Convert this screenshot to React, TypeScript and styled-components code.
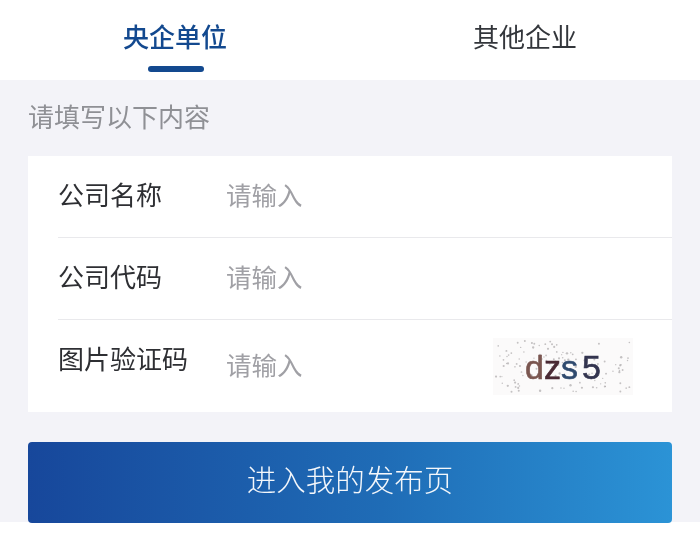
import React from "react";
import styled, { createGlobalStyle } from "styled-components";

const Global = createGlobalStyle`
  html, body { margin: 0; padding: 0; background: #fff; }
  body { font-family: "Noto Sans CJK SC", "Liberation Sans", sans-serif; }
  * { box-sizing: border-box; }
`;

const Page = styled.div`
  width: 700px;
  height: 555px;
  background: #fff;
  overflow: hidden;
  filter: blur(0.35px);
`;

const Tabs = styled.div`
  display: flex;
  height: 80px;
  background: #fff;
`;

const Tab = styled.div<{ $active?: boolean }>`
  position: relative;
  width: 350px;
  padding-top: 17px;
  text-align: center;
  font-size: 26px;
  line-height: 38px;
  font-weight: ${(p) => (p.$active ? 500 : 400)};
  color: ${(p) => (p.$active ? "#13498f" : "#33363b")};
`;

const Indicator = styled.div`
  position: absolute;
  left: 148px;
  top: 66px;
  width: 56px;
  height: 6px;
  border-radius: 3px;
  background: #13498f;
`;

const Body = styled.div`
  height: 442px;
  padding: 0 28px;
  background: #f3f3f8;
`;

const Hint = styled.div`
  height: 76px;
  padding-top: 17px;
  font-size: 26px;
  line-height: 38px;
  font-weight: 400;
  color: #8f9095;
`;

const Card = styled.div`
  height: 256px;
  padding-left: 30px;
  background: #fff;
`;

const Row = styled.div<{ $last?: boolean }>`
  display: flex;
  align-items: flex-start;
  height: ${(p) => (p.$last ? "93px" : "82px")};
  padding-top: 19px;
  border-bottom: ${(p) => (p.$last ? "none" : "1px solid #e9e9ec")};
`;

const Label = styled.div`
  width: 168px;
  font-size: 26px;
  line-height: 38px;
  color: #2e2f33;
`;

const Placeholder = styled.div<{ $low?: boolean }>`
  flex: 1;
  margin-top: ${(p) => (p.$low ? "6px" : "0")};
  font-size: 25.5px;
  line-height: 38px;
  font-weight: 400;
  color: #a0a0a5;
`;

const Captcha = styled.div`
  position: relative;
  display: flex;
  align-items: center;
  justify-content: center;
  width: 140px;
  height: 57px;
  margin: -1px 39px 0 0;
  background: #fbfafa;
`;

const Noise = styled.svg`
  position: absolute;
  inset: 0;
`;

const Glyph = styled.span<{ $color: string; $spaced?: boolean }>`
  position: relative;
  margin-left: ${(p) => (p.$spaced ? "4px" : "0")};
  font-family: "Liberation Sans", sans-serif;
  font-size: 34px;
  line-height: 40px;
  color: ${(p) => p.$color};
  -webkit-text-stroke: 0.6px ${(p) => p.$color};
`;

const Submit = styled.div`
  display: flex;
  align-items: center;
  justify-content: center;
  height: 81px;
  margin-top: 30px;
  padding-bottom: 9px;
  border-radius: 4px;
  background: linear-gradient(90deg, #17479b 0%, #1f6cb6 55%, #2b93d6 100%);
  font-size: 29.5px;
  font-weight: 300;
  color: #f4f7fb;
`;

const rand = (seed: number) => {
  const v = Math.sin(seed * 12.9898) * 43758.5453;
  return v - Math.floor(v);
};

const dots = Array.from({ length: 120 }, (_, i) => ({
  x: 3 + rand(i + 1) * 134,
  y: 3 + rand(i + 501) * 51,
  r: 0.6 + rand(i + 901) * 0.6,
}));

const letters: { c: string; color: string; spaced?: boolean }[] = [
  { c: "d", color: "#7a5650" },
  { c: "z", color: "#4a2a34" },
  { c: "s", color: "#2f4a6e" },
  { c: "5", color: "#33344f", spaced: true },
];

export default function App() {
  return (
    <Page>
      <Global />
      <Tabs>
        <Tab $active>
          央企单位
          <Indicator />
        </Tab>
        <Tab>其他企业</Tab>
      </Tabs>
      <Body>
        <Hint>请填写以下内容</Hint>
        <Card>
          <Row>
            <Label>公司名称</Label>
            <Placeholder>请输入</Placeholder>
          </Row>
          <Row>
            <Label>公司代码</Label>
            <Placeholder>请输入</Placeholder>
          </Row>
          <Row $last>
            <Label>图片验证码</Label>
            <Placeholder $low>请输入</Placeholder>
            <Captcha>
              <Noise width="140" height="57" viewBox="0 0 140 57">
                {dots.map((d, i) => (
                  <circle key={i} cx={d.x} cy={d.y} r={d.r} fill="#8d8a8c" opacity="0.5" />
                ))}
              </Noise>
              {letters.map((l) => (
                <Glyph key={l.c} $color={l.color} $spaced={l.spaced}>
                  {l.c}
                </Glyph>
              ))}
            </Captcha>
          </Row>
        </Card>
        <Submit>进入我的发布页</Submit>
      </Body>
    </Page>
  );
}
